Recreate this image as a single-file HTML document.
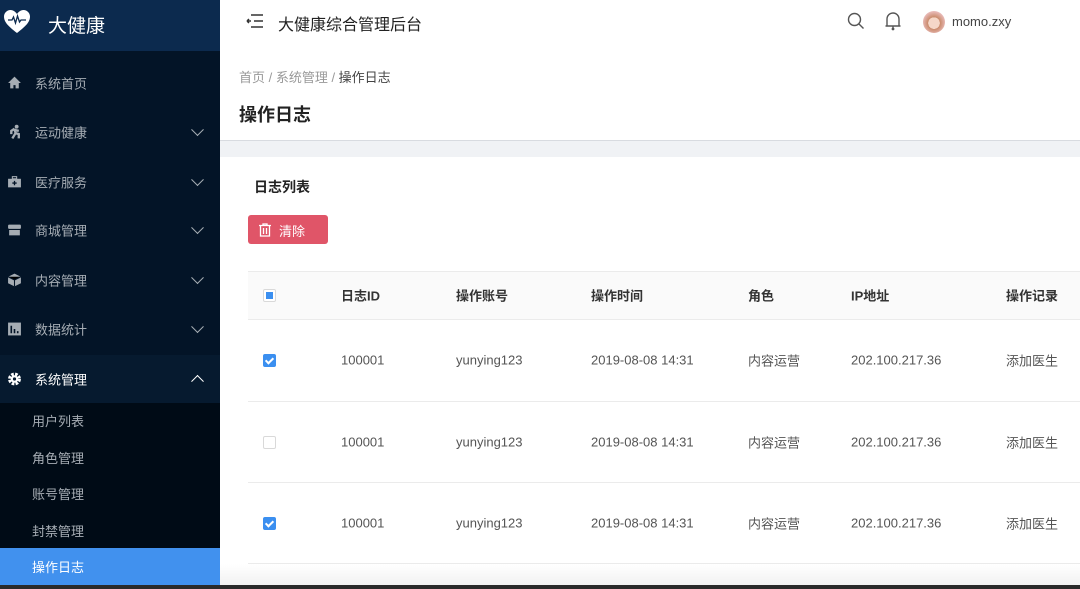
<!DOCTYPE html>
<html><head><meta charset="utf-8"><style>
*{margin:0;padding:0;box-sizing:border-box}
body{width:1080px;height:589px;overflow:hidden;position:relative;font-family:"Liberation Sans","Noto Sans CJK SC",sans-serif;background:#fff}
.side{position:absolute;left:0;top:0;width:220px;height:585px;background:#031427}
.logo{height:51px;background:#0c2a4e;color:#fff;font-size:19px;position:relative}
.logo span{position:absolute;left:48px;top:11px}
.mi{position:absolute;left:0;width:220px;height:40px;color:#a6adb4;font-size:13px}
.mi .t{position:absolute;left:35px;top:50%;transform:translateY(-50%)}
.mi .ic{position:absolute;left:7px;top:50%;transform:translateY(-50%);width:15px;height:15px}
.mi .ar{position:absolute;left:193px;top:50%;width:9px;height:9px;border-right:1.6px solid #a6adb4;border-bottom:1.6px solid #a6adb4;transform:translateY(-75%) rotate(45deg)}
.sub{position:absolute;left:0;top:403px;width:220px;height:182px;background:#000b16}
.si{position:absolute;left:32px;color:#a6adb4;font-size:13px}
.act{position:absolute;left:0;top:548px;width:220px;height:37px;background:#4191ee}
.bottom{position:absolute;left:0;top:585px;width:1080px;height:4px;background:#2a2a2a}
.main{position:absolute;left:220px;top:0;width:860px;height:585px}
.cb{position:absolute;width:13px;height:13px;border-radius:2px}
.cbc{background:#3b8ff0}
.cbc:after{content:"";position:absolute;left:4px;top:1.5px;width:3px;height:6px;border-right:2px solid #fff;border-bottom:2px solid #fff;transform:rotate(45deg)}
.cbe{border:1px solid #d9d9d9;background:#fff}
.row{position:absolute;left:28px;width:832px;border-bottom:1px solid #ebebeb}
.c{position:absolute;font-size:13px;color:#555;transform:translateY(-50%)}
.h{color:#333;font-weight:bold}
</style></head><body>
<div class="side">
 <div class="logo">
  <svg style="position:absolute;left:4px;top:10px" width="26" height="24" viewBox="0 0 26 24"><path d="M13 23C4 16 0 12 0 6.5 0 3 3 0 6.5 0 9.5 0 11.5 2 13 4 14.5 2 16.5 0 19.5 0 23 0 26 3 26 6.5 26 12 22 16 13 23Z" fill="#fff"/><path d="M4 10h4l1.5-3 2 6 2-7 2 6 1.5-2h5" stroke="#0c2a4e" stroke-width="1.3" fill="none"/></svg>
  <span>大健康</span>
 </div>
 <div class="mi" style="top:63px"><svg class="ic" viewBox="0 0 14 14"><path d="M7 1L1 7h2v5h3V9h2v3h3V7h2z" fill="#a6adb4"/></svg><span class="t">系统首页</span></div>
 <div class="mi" style="top:112px"><svg class="ic" viewBox="0 0 14 14"><circle cx="9" cy="2" r="1.8" fill="#a6adb4"/><path d="M7 4l-3 2v3M7 4l1 4-3 5M8 8l3 1v4M7 5l4 1" stroke="#a6adb4" stroke-width="2.2" fill="none"/></svg><span class="t">运动健康</span><span class="ar"></span></div>
 <div class="mi" style="top:162px"><svg class="ic" viewBox="0 0 14 14"><rect x="1" y="4" width="12" height="8" fill="#a6adb4"/><rect x="5" y="2" width="4" height="2" fill="none" stroke="#a6adb4"/><path d="M7 6v4M5 8h4" stroke="#031427" stroke-width="1.2"/></svg><span class="t">医疗服务</span><span class="ar"></span></div>
 <div class="mi" style="top:210px"><svg class="ic" viewBox="0 0 14 14"><rect x="1" y="2" width="12" height="4" rx="1" fill="#a6adb4"/><rect x="2" y="7" width="10" height="5" fill="#a6adb4"/></svg><span class="t">商城管理</span><span class="ar"></span></div>
 <div class="mi" style="top:260px"><svg class="ic" viewBox="0 0 14 14"><path d="M7 1l6 3v6l-6 3-6-3V4z" fill="#a6adb4"/><path d="M1 4l6 3 6-3M7 7v6" stroke="#031427" stroke-width="1"/></svg><span class="t">内容管理</span><span class="ar"></span></div>
 <div class="mi" style="top:309px"><svg class="ic" viewBox="0 0 14 14"><rect x="1" y="1" width="12" height="12" fill="#a6adb4"/><path d="M4 4v7M7 7v4M10 9v2" stroke="#031427" stroke-width="1.5"/></svg><span class="t">数据统计</span><span class="ar"></span></div>
 <div style="position:absolute;top:355px;left:0;width:220px;height:48px;background:#061a2f"></div>
 <div class="mi" style="top:359px;color:#fff"><svg class="ic" viewBox="0 0 14 14"><circle cx="7" cy="7" r="4.5" fill="none" stroke="#fff" stroke-width="3" stroke-dasharray="2.4 1.2"/><circle cx="7" cy="7" r="3.5" fill="#fff"/><circle cx="7" cy="7" r="1.5" fill="#061a2f"/></svg><span class="t">系统管理</span><span class="ar" style="border-color:#fff;transform:translateY(-25%) rotate(225deg)"></span></div>
 <div class="sub"></div>
 <div class="act"></div>
 <div class="si" style="top:411px">用户列表</div>
 <div class="si" style="top:448px">角色管理</div>
 <div class="si" style="top:484px">账号管理</div>
 <div class="si" style="top:521px">封禁管理</div>
 <div class="si" style="top:557px;color:#fff">操作日志</div>
</div>
<div class="main">
 <svg style="position:absolute;left:26px;top:14px" width="18" height="14" viewBox="0 0 18 14"><path d="M5 1h12M8 7h9M5 13h12M1 7h4M1 7l2-2M1 7l2 2" stroke="#333" stroke-width="1.5" fill="none"/></svg>
 <div style="position:absolute;left:58px;top:11px;font-size:16px;color:#222">大健康综合管理后台</div>
 <svg style="position:absolute;left:627px;top:12px" width="18" height="18" viewBox="0 0 18 18"><circle cx="7.5" cy="7.5" r="6" fill="none" stroke="#555" stroke-width="1.4"/><path d="M12 12l4.5 4.5" stroke="#555" stroke-width="1.4"/></svg>
 <div style="position:absolute;left:665px;top:11px;"><svg width="16" height="20" viewBox="0 0 16 20"><path d="M2 15V8a6 6 0 0112 0v7zM0.5 15h15M8 15v3" stroke="#555" stroke-width="1.4" fill="none"/><circle cx="8" cy="18" r="1.4" fill="#555"/></svg></div>
 <div style="position:absolute;left:703px;top:11px;width:22px;height:22px;border-radius:50%;background:radial-gradient(circle at 50% 55%,#f5d7c8 35%,#c98a6a 36%,#e8b9b6 70%)"></div>
 <div style="position:absolute;left:732px;top:14px;font-size:13px;color:#444">momo.zxy</div>
 <div style="position:absolute;left:19px;top:67px;font-size:13px;color:#999">首页 / 系统管理 / <span style="color:#444">操作日志</span></div>
 <div style="position:absolute;left:19px;top:101px;font-size:18px;color:#222;font-weight:bold">操作日志</div>
 <div style="position:absolute;left:0;top:140px;width:860px;height:17px;background:#f0f2f5;border-top:1px solid #d8dbe0"></div>
 <div style="position:absolute;left:34px;top:177px;font-size:14px;color:#222;font-weight:bold">日志列表</div>
 <div style="position:absolute;left:28px;top:215px;width:80px;height:29px;border-radius:3px;background:#e05568;color:#fff;font-size:13px">
  <svg style="position:absolute;left:11px;top:8px" width="12" height="14" viewBox="0 0 12 14"><path d="M0 2.5h12M4 2.5V1h4v1.5M1.5 2.5V13h9V2.5M4.5 5v6M7.5 5v6" stroke="#fff" stroke-width="1.3" fill="none"/></svg>
  <span style="position:absolute;left:31px;top:6px">清除</span></div>
 <div class="row" style="top:271px;height:49px;background:#fafafa;border-top:1px solid #ebebeb"></div>
 <div class="row" style="top:320px;height:82px"></div>
 <div class="row" style="top:402px;height:81px"></div>
 <div class="row" style="top:483px;height:81px"></div>

 <div class="cb cbe" style="left:43px;top:289px"><div style="position:absolute;left:2px;top:2px;width:7px;height:7px;background:#3b8ff0"></div></div>
 <div class="c h" style="left:121px;top:295px">日志ID</div>
 <div class="c h" style="left:236px;top:295px">操作账号</div>
 <div class="c h" style="left:371px;top:295px">操作时间</div>
 <div class="c h" style="left:528px;top:295px">角色</div>
 <div class="c h" style="left:631px;top:295px">IP地址</div>
 <div class="c h" style="left:786px;top:295px">操作记录</div>

 <div class="cb cbc" style="left:43px;top:354px"></div>
 <div class="cb cbe" style="left:43px;top:436px"></div>
 <div class="cb cbc" style="left:43px;top:517px"></div>

 <div class="c" style="left:121px;top:360px">100001</div><div class="c" style="left:236px;top:360px">yunying123</div><div class="c" style="left:371px;top:360px">2019-08-08 14:31</div><div class="c" style="left:528px;top:360px">内容运营</div><div class="c" style="left:631px;top:360px">202.100.217.36</div><div class="c" style="left:786px;top:360px">添加医生</div>
 <div class="c" style="left:121px;top:442px">100001</div><div class="c" style="left:236px;top:442px">yunying123</div><div class="c" style="left:371px;top:442px">2019-08-08 14:31</div><div class="c" style="left:528px;top:442px">内容运营</div><div class="c" style="left:631px;top:442px">202.100.217.36</div><div class="c" style="left:786px;top:442px">添加医生</div>
 <div class="c" style="left:121px;top:523px">100001</div><div class="c" style="left:236px;top:523px">yunying123</div><div class="c" style="left:371px;top:523px">2019-08-08 14:31</div><div class="c" style="left:528px;top:523px">内容运营</div><div class="c" style="left:631px;top:523px">202.100.217.36</div><div class="c" style="left:786px;top:523px">添加医生</div>
 <div style="position:absolute;left:0;top:564px;width:860px;height:21px;background:linear-gradient(#fff,#f2f2f2)"></div>
</div>
<div class="bottom"></div>
</body></html>
